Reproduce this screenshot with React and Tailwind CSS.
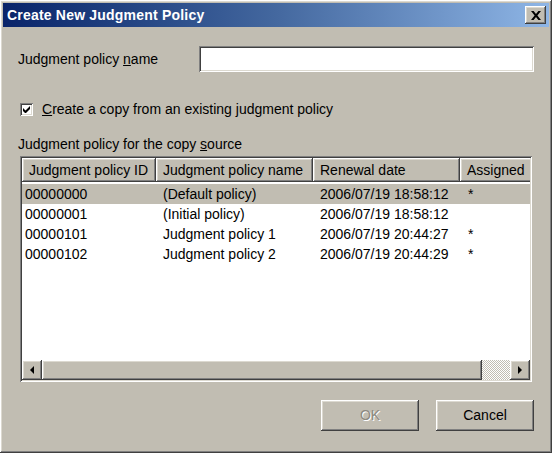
import React from "react";

const raised =
  "shadow-[inset_-1px_-1px_0_#404040,inset_1px_1px_0_#ffffff,inset_-2px_-2px_0_#808080,inset_2px_2px_0_#dcd9d0]";
const sunken =
  "shadow-[inset_1px_1px_0_#808080,inset_-1px_-1px_0_#ffffff,inset_2px_2px_0_#404040,inset_-2px_-2px_0_#dcd9d0]";

const rows = [
  { id: "00000000", name: "(Default policy)", date: "2006/07/19 18:58:12", assigned: "*", selected: true },
  { id: "00000001", name: "(Initial policy)", date: "2006/07/19 18:58:12", assigned: "" },
  { id: "00000101", name: "Judgment policy 1", date: "2006/07/19 20:44:27", assigned: "*" },
  { id: "00000102", name: "Judgment policy 2", date: "2006/07/19 20:44:29", assigned: "*" },
];

function HeaderCell({ w, children }) {
  return (
    <div className={`${w} h-full shrink-0 flex items-center pl-[7px] bg-[#c1bdb2] ${raised} whitespace-nowrap overflow-hidden`}>
      {children}
    </div>
  );
}

function Button({ children, disabled }) {
  return (
    <div className={`w-[98px] h-[31px] flex items-center justify-center bg-[#c1bdb2] ${raised}`}>
      <span className={disabled ? "text-[#8c897f] [text-shadow:1px_1px_0_#ffffff]" : "text-black"}>{children}</span>
    </div>
  );
}

export default function App() {
  return (
    <div
      className={`w-[552px] h-[453px] bg-[#c1bdb2] p-[3px] flex flex-col text-[14px] text-black ${raised}`}
      style={{ fontFamily: '"Liberation Sans", Arial, sans-serif' }}
    >
      {/* title bar */}
      <div className="h-[24px] flex items-center justify-between pl-[4px] pr-[3px] bg-gradient-to-r from-[#0a246a] via-[#44689f] to-[#8fb6e6]">
        <span className="text-white font-bold text-[14px] tracking-[0.2px]">Create New Judgment Policy</span>
        <div className={`w-[21px] h-[18px] flex items-center justify-center bg-[#c1bdb2] ${raised}`}>
          <svg width="10" height="9" viewBox="0 0 10 9">
            <path d="M0 0h2.6l2.4 3 2.4-3H10L6.4 4.5 10 9H7.4L5 6 2.6 9H0l3.6-4.5z" fill="#000" />
          </svg>
        </div>
      </div>

      <div className="flex flex-col pl-[15px] pr-[15px]">
        {/* name row */}
        <div className="flex items-center mt-[19px] h-[26px]">
          <span className="w-[181px] shrink-0">
            Judgment policy <span className="underline">n</span>ame
          </span>
          <div className={`w-[335px] h-[26px] bg-white ${sunken}`} />
        </div>

        {/* checkbox */}
        <div className="flex items-center mt-[31px] h-[13px] ml-[2px]">
          <div className={`w-[13px] h-[13px] bg-white flex items-center justify-center ${sunken}`}>
            <svg width="7" height="7" viewBox="0 0 7 7">
              <path d="M0 2v3l2 2h1l4-4V0L2.5 4.5z" fill="#000" />
            </svg>
          </div>
          <span className="ml-[9px]">
            <span className="underline">C</span>reate a copy from an existing judgment policy
          </span>
        </div>

        <div className="mt-[20px] h-[16px] leading-[16px]">
          Judgment policy for the copy <span className="underline">s</span>ource
        </div>

        {/* list view */}
        <div className={`mt-[4px] ml-[2px] w-[512px] h-[226px] bg-white p-[2px] flex flex-col ${sunken}`}>
          <div className="h-[24px] flex shrink-0 overflow-hidden">
            <HeaderCell w="w-[134px]">Judgment policy ID</HeaderCell>
            <HeaderCell w="w-[157px]">Judgment policy name</HeaderCell>
            <HeaderCell w="w-[147px]">Renewal date</HeaderCell>
            <HeaderCell w="w-[90px]">Assigned</HeaderCell>
          </div>
          <div className="flex-1 flex flex-col pt-[2px]">
            {rows.map((r) => (
              <div
                key={r.id}
                className={`h-[20px] flex items-center whitespace-nowrap ${r.selected ? "bg-[#c1bdb2]" : ""}`}
              >
                <span className="w-[141px] pl-[3px] shrink-0">{r.id}</span>
                <span className="w-[157px] shrink-0">{r.name}</span>
                <span className="w-[148px] shrink-0">{r.date}</span>
                <span className="flex-1">{r.assigned}</span>
              </div>
            ))}
          </div>
          {/* horizontal scrollbar */}
          <div className="h-[20px] flex shrink-0">
            <div className={`w-[20px] h-full flex items-center justify-center bg-[#c1bdb2] ${raised}`}>
              <svg width="4" height="8" viewBox="0 0 4 8"><path d="M4 0v8L0 4z" fill="#000" /></svg>
            </div>
            <div className={`w-[440px] h-full bg-[#c1bdb2] ${raised}`} />
            <div className="flex-1 h-full bg-[repeating-conic-gradient(#ffffff_0_25%,#c1bdb2_0_50%)] bg-[length:2px_2px]" />
            <div className={`w-[20px] h-full flex items-center justify-center bg-[#c1bdb2] ${raised}`}>
              <svg width="4" height="8" viewBox="0 0 4 8"><path d="M0 0v8L4 4z" fill="#000" /></svg>
            </div>
          </div>
        </div>

        {/* buttons */}
        <div className="flex justify-end gap-[17px] mt-[18px]">
          <Button disabled>OK</Button>
          <Button>Cancel</Button>
        </div>
      </div>
    </div>
  );
}
